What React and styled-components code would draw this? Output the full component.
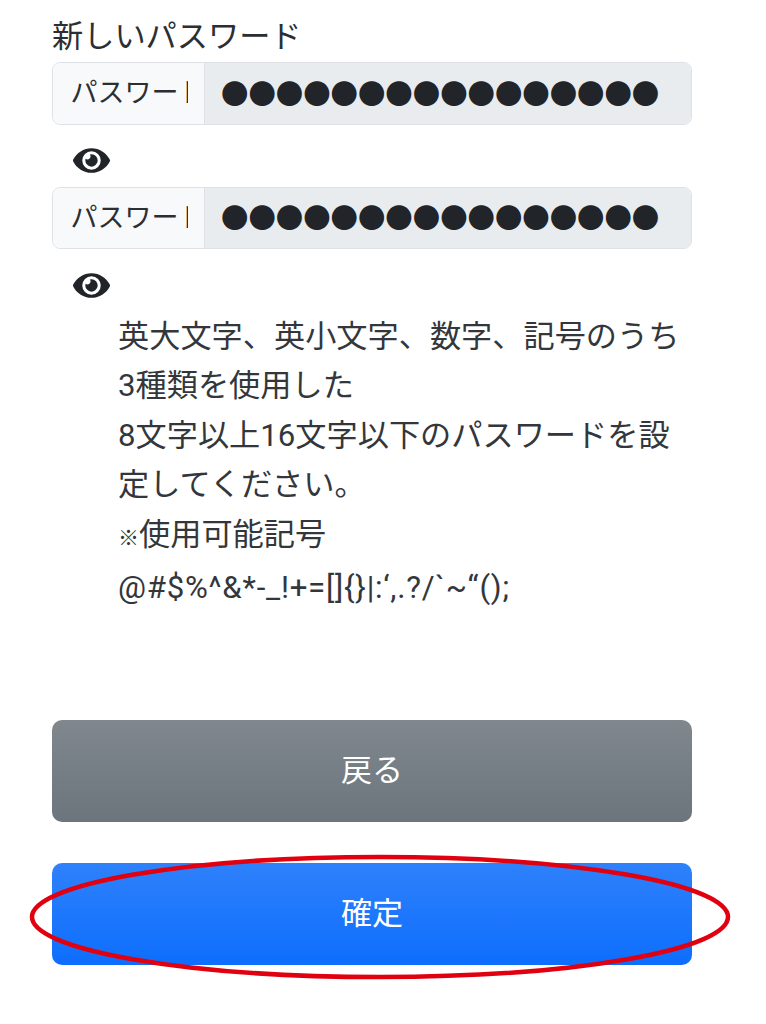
import React from 'react'
import styled, { createGlobalStyle } from 'styled-components'
import { FaEye } from 'react-icons/fa'

const GlobalStyle = createGlobalStyle`
  html, body {
    margin: 0;
    padding: 0;
    background: #fff;
  }
`

const App = () => {
  return (
    <>
      <GlobalStyle />
      <Page>
        <Label>新しいパスワード</Label>
        <PasswordField />
        <PasswordField />
        <Notice>
          英大文字、英小文字、数字、記号のうち<br />
          3種類を使用した<br />
          8文字以上16文字以下のパスワードを設定してください。<br />
          <NoteMark>※</NoteMark>使用可能記号<br />
          <Symbols>@#$%^&amp;*-_!+=[]{'{}'}|:‘,.?/`~“();</Symbols>
        </Notice>
        <Buttons>
          <ActionButton>戻る</ActionButton>
          <ActionButton $primary>確定</ActionButton>
        </Buttons>
        <Highlight viewBox="0 0 704 128" aria-hidden="true">
          <ellipse cx="352" cy="64" rx="348" ry="60" fill="none" stroke="#e0000f" strokeWidth="4.5" />
        </Highlight>
      </Page>
    </>
  )
}

const PasswordField = () => (
  <Field>
    <InputGroup>
      <Addon><AddonText>パスワード</AddonText></Addon>
      <Masked>●●●●●●●●●●●●●●●●</Masked>
    </InputGroup>
    <EyeButton><FaEye size={37} color="#212529" /></EyeButton>
  </Field>
)

export default App

const Page = styled.div`
  position: relative;
  box-sizing: border-box;
  width: 766px;
  height: 1024px;
  padding: 16px 74px 0 52px;
  overflow: hidden;
  font-family: Roboto, "Noto Sans CJK JP", sans-serif;
  color: #2b2f33;
`

const Label = styled.div`
  height: 46px;
  font-size: 31.2px;
  line-height: 41px;
`

const Field = styled.div`
  display: flex;
  flex-direction: column;
`

const InputGroup = styled.div`
  display: flex;
  box-sizing: border-box;
  height: 62.5px;
  border: 1.5px solid #dee2e6;
  border-radius: 8px;
  overflow: hidden;
`

const Addon = styled.div`
  display: flex;
  align-items: center;
  box-sizing: border-box;
  width: 152px;
  padding-left: 17.5px;
  background: #f8f9fa;
  border-right: 1.5px solid #dee2e6;
`

const AddonText = styled.span`
  display: block;
  width: 117.5px;
  overflow: hidden;
  white-space: nowrap;
  font-size: 27px;
  line-height: 40px;
`

const Masked = styled.div`
  flex: 1;
  display: flex;
  align-items: center;
  padding: 0 0 3px 16px;
  background: #e9ecef;
  color: #212529;
  font-size: 27.4px;
  white-space: nowrap;
  font-family: "Noto Sans CJK JP", sans-serif;
`

const EyeButton = styled.div`
  display: flex;
  align-items: flex-start;
  box-sizing: border-box;
  height: 62px;
  padding: 17.5px 0 0 21px;
`

const Notice = styled.p`
  margin: 1px 0 0;
  padding: 0 0 0 66px;
  font-size: 31.2px;
  line-height: 49.4px;
  color: #33373b;
`

const NoteMark = styled.span`
  font-size: 21px;
  font-weight: 700;
`

const Symbols = styled.span`
  letter-spacing: 0.75px;
`

const Buttons = styled.div`
  display: flex;
  flex-direction: column;
  gap: 41px;
  margin-top: 108px;
`

const ActionButton = styled.button`
  height: 102px;
  border: none;
  border-radius: 10px;
  padding: 0 0 8px;
  font-family: inherit;
  font-size: 31px;
  color: #fff;
  background: ${(p) =>
    p.$primary
      ? 'linear-gradient(to bottom, #2f81fb, #0d6efd)'
      : 'linear-gradient(to bottom, #80888e, #6c757d)'};
`

const Highlight = styled.svg`
  position: absolute;
  left: 28px;
  top: 853px;
  width: 704px;
  height: 128px;
  pointer-events: none;
`
